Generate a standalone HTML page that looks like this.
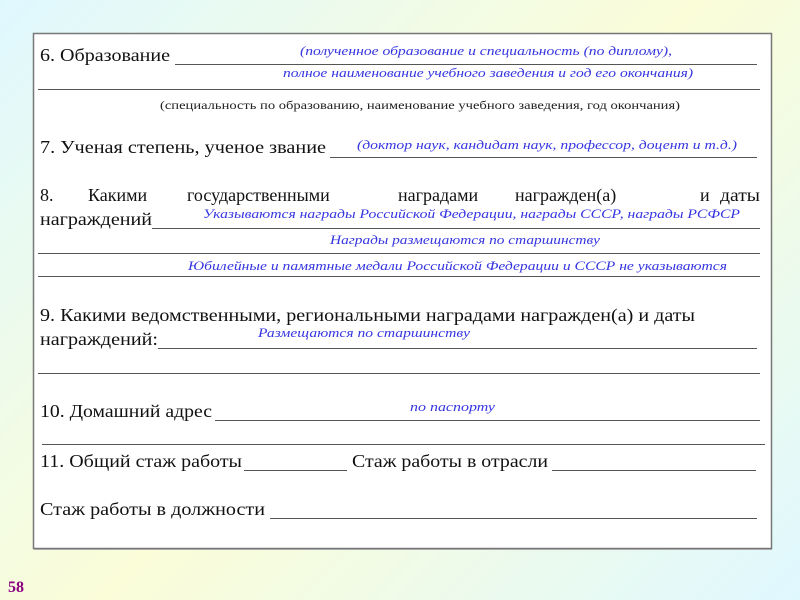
<!DOCTYPE html>
<html><head><meta charset="utf-8"><style>
html,body{margin:0;padding:0;width:800px;height:600px;overflow:hidden}
body{background:linear-gradient(135deg,#dff8ff 0%,#fbfdd8 50%,#dff8ff 100%)}
svg{position:absolute;left:0;top:0}
text{font-family:"Liberation Serif",serif}
.m{font-size:18px;fill:#111}
.b{font-size:13px;font-style:italic;fill:#3434e0}
.g{font-size:12px;fill:#222}
</style></head><body>
<svg width="800" height="600" viewBox="0 0 800 600">
<rect x="33.5" y="33.5" width="738" height="515" fill="#fff" stroke="#777" stroke-width="1.5"/>
<line x1="34" y1="549.5" x2="772" y2="549.5" stroke="#aaa" stroke-width="1"/>
<g stroke="#555" stroke-width="1">
<line x1="175" y1="64.5" x2="757" y2="64.5"/>
<line x1="38" y1="89.5" x2="760" y2="89.5"/>
<line x1="330" y1="157.5" x2="757" y2="157.5"/>
<line x1="152" y1="228.5" x2="760" y2="228.5"/>
<line x1="38" y1="253.5" x2="760" y2="253.5"/>
<line x1="38" y1="276.5" x2="760" y2="276.5"/>
<line x1="158" y1="348.5" x2="757" y2="348.5"/>
<line x1="38" y1="373.5" x2="760" y2="373.5"/>
<line x1="215" y1="420.5" x2="760" y2="420.5"/>
<line x1="42" y1="444.5" x2="765" y2="444.5"/>
<line x1="244" y1="470.5" x2="347" y2="470.5"/>
<line x1="552" y1="470.5" x2="756" y2="470.5"/>
<line x1="270" y1="518.5" x2="757" y2="518.5"/>
</g>
<text class="m" x="40" y="61" textLength="130" lengthAdjust="spacingAndGlyphs">6. Образование</text>
<text class="b" x="300" y="55" textLength="372" lengthAdjust="spacingAndGlyphs">(полученное образование и специальность (по диплому),</text>
<text class="b" x="283" y="77" textLength="410" lengthAdjust="spacingAndGlyphs">полное наименование учебного заведения и год его окончания)</text>
<text class="g" x="160" y="109" textLength="520" lengthAdjust="spacingAndGlyphs">(специальность по образованию, наименование учебного заведения, год окончания)</text>
<text class="m" x="40" y="153" textLength="286" lengthAdjust="spacingAndGlyphs">7. Ученая степень, ученое звание</text>
<text class="b" x="357" y="149" textLength="380" lengthAdjust="spacingAndGlyphs">(доктор наук, кандидат наук, профессор, доцент и т.д.)</text>
<text class="m" x="40" y="201">8.</text>
<text class="m" x="88" y="201">Какими</text>
<text class="m" x="187" y="201">государственными</text>
<text class="m" x="398" y="201">наградами</text>
<text class="m" x="515" y="201">награжден(а)</text>
<text class="m" x="700" y="201">и</text>
<text class="m" x="720" y="201" textLength="40" lengthAdjust="spacingAndGlyphs">даты</text>
<text class="m" x="40" y="225" textLength="112" lengthAdjust="spacingAndGlyphs">награждений</text>
<text class="b" x="203" y="218" textLength="537" lengthAdjust="spacingAndGlyphs">Указываются награды Российской Федерации, награды СССР, награды РСФСР</text>
<text class="b" x="330" y="244" textLength="270" lengthAdjust="spacingAndGlyphs">Награды размещаются по старшинству</text>
<text class="b" x="188" y="270" textLength="539" lengthAdjust="spacingAndGlyphs">Юбилейные и памятные медали Российской Федерации и СССР не указываются</text>
<text class="m" x="40" y="321" textLength="655" lengthAdjust="spacingAndGlyphs">9. Какими ведомственными, региональными наградами награжден(а) и даты</text>
<text class="m" x="40" y="345" textLength="118" lengthAdjust="spacingAndGlyphs">награждений:</text>
<text class="b" x="258" y="337" textLength="212" lengthAdjust="spacingAndGlyphs">Размещаются по старшинству</text>
<text class="m" x="40" y="417" textLength="172" lengthAdjust="spacingAndGlyphs">10. Домашний адрес</text>
<text class="b" x="410" y="411" textLength="85" lengthAdjust="spacingAndGlyphs">по паспорту</text>
<text class="m" x="40" y="467" textLength="202" lengthAdjust="spacingAndGlyphs">11. Общий стаж работы</text>
<text class="m" x="352" y="467" textLength="196" lengthAdjust="spacingAndGlyphs">Стаж работы в отрасли</text>
<text class="m" x="40" y="515" textLength="225" lengthAdjust="spacingAndGlyphs">Стаж работы в должности</text>
<text x="8" y="592" style="font-size:16px;font-weight:bold;fill:#8b0080">58</text>
</svg>
</body></html>
